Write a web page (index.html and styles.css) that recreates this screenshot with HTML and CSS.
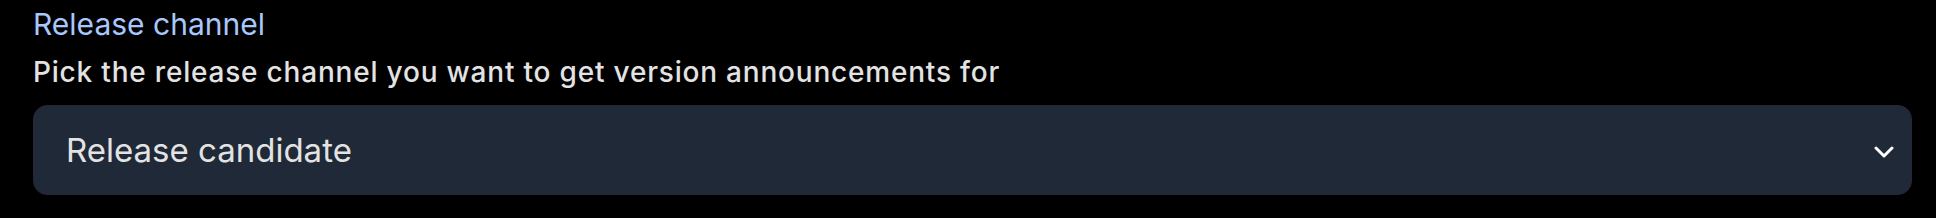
FILE: index.html
```html
<!DOCTYPE html>
<html lang="en">
<head>
    <meta charset="UTF-8">
    <title>Release channel</title>
    <link rel="stylesheet" href="styles.css">
</head>
<body>
    <div class="setting">
        <label class="setting-title" for="channel">Release channel</label>
        <p class="setting-desc">Pick the release channel you want to get version announcements for</p>

        <div class="select-wrap">
            <select id="channel" class="select">
                <option value="stable">Stable</option>
                <option value="beta">Beta</option>
                <option value="rc" selected>Release candidate</option>
                <option value="nightly">Nightly</option>
            </select>
            <svg class="chevron" width="20" height="12" viewBox="0 0 20 12">
                <path d="M2 2 L10 10 L18 2" fill="none" stroke="#ffffff" stroke-width="3" stroke-linecap="round" stroke-linejoin="round"/>
            </svg>
        </div>
    </div>
</body>
</html>
```

FILE: styles.css
```css
body {
    margin: 0;
    background: #000;
    font-family: Inter, Roboto, sans-serif;
}

.setting {
    padding: 6px 24px 0 33px;
}

.setting-title {
    display: block;
    color: #a8c7fa;
    font-size: 30px;
    line-height: 36px;
}

.setting-desc {
    margin: 12px 0 0 0;
    color: #e3e3e3;
    font-size: 28px;
    font-weight: 500;
    letter-spacing: 0.8px;
    line-height: 36px;
}

.select-wrap {
    position: relative;
    margin-top: 15px;
}

.select {
    width: 100%;
    height: 90px;
    padding: 0 80px 0 32px;
    background-color: #1f2937;
    border: 1.5px solid #262535;
    border-radius: 14px;
    color: #e3e3e3;
    font-family: Inter, Roboto, sans-serif;
    font-size: 33px;
    appearance: none;
    -webkit-appearance: none;
    outline: none;
}

.chevron {
    position: absolute;
    right: 18px;
    top: 41px;
    pointer-events: none;
}
```
